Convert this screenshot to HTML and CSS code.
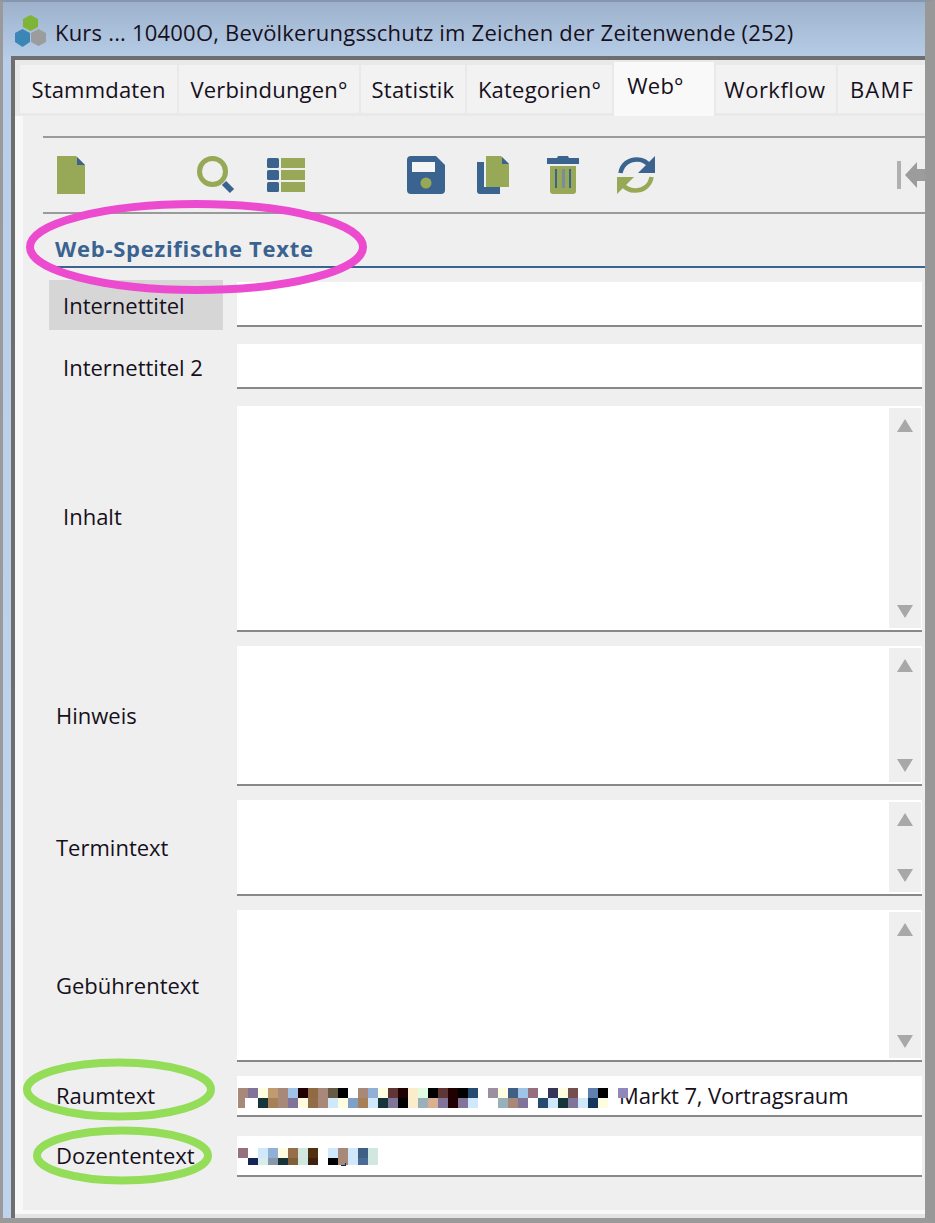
FILE: index.html
```html
<!DOCTYPE html>
<html lang="de">
<head>
<meta charset="utf-8">
<title>Kurs</title>
<link rel="stylesheet" href="styles.css">
</head>
<body>
<div class="app">
  <header class="titlebar">
    <svg class="appicon" width="34" height="34" viewBox="0 0 34 34">
      <polygon fill="#7fb536" points="16.5,1 24,5 24,13 16.5,17 9,13 9,5"/>
      <polygon fill="#3a86b6" points="8.5,15 16,19 16,28 8.5,33 1,28 1,19"/>
      <polygon fill="#9c9c9c" points="24.5,15 32,19 32,28 24.5,32 17,28 17,19"/>
    </svg>
    <span class="title">Kurs ... 10400O, Bevölkerungsschutz im Zeichen der Zeitenwende (252)</span>
  </header>
  <div class="window">
    <nav class="tabs">
      <div class="tab t1">Stammdaten</div>
      <div class="tab t2">Verbindungen°</div>
      <div class="tab t3">Statistik</div>
      <div class="tab t4">Kategorien°</div>
      <div class="tab active t5">Web°</div>
      <div class="tab t6">Workflow</div>
      <div class="tab t7">BAMF</div>
    </nav>
    <main class="content">
      <div class="toolbar">
        <svg class="tool" viewBox="0 0 38 38"><path fill="#97a957" d="M0 0H19L28 9V38H0Z"/><path fill="#3a6390" d="M20 1L28 9H20Z"/></svg>
        <svg class="tool spaced" viewBox="0 0 38 38"><circle cx="15.5" cy="15.500" r="13" fill="none" stroke="#97a957" stroke-width="5"/><path d="M27 27L35 35" stroke="#3a6390" stroke-width="6"/></svg>
        <svg class="tool" viewBox="0 0 38 38"><g fill="#3a6390"><rect y="2" width="12" height="10" rx="1.5"/><rect y="14" width="12" height="10" rx="1.5"/><rect y="26" width="12" height="10" rx="1.5"/></g><g fill="#97a957"><rect x="14" y="2" width="24" height="10"/><rect x="14" y="14" width="24" height="10"/><rect x="14" y="26" width="24" height="10"/></g></svg>
        <svg class="tool spaced" viewBox="0 0 38 38"><path fill="#3a6390" d="M4 0H29L38 9V34a4 4 0 0 1-4 4H4a4 4 0 0 1-4-4V4a4 4 0 0 1 4-4Z"/><rect x="5" y="6" width="23" height="10" fill="#f4f4f4"/><circle cx="19" cy="27" r="5.5" fill="#97a957"/></svg>
        <svg class="tool" viewBox="0 0 38 38"><path fill="#3a6390" d="M0 6H7V31H23V38H3a3 3 0 0 1-3-3Z"/><path fill="#97a957" d="M9 0H24L32 8V31H9Z"/><path fill="#3a6390" d="M25 1L32 8H25Z"/></svg>
        <svg class="tool" viewBox="0 0 38 38"><path fill="#3a6390" d="M11 0H21L22 2H32V8H0V2H10Z"/><path fill="#97a957" d="M3 10H29V35a3 3 0 0 1-3 3H6a3 3 0 0 1-3-3Z"/><g fill="#3a6390"><rect x="8" y="13" width="2" height="19"/><rect x="22" y="13" width="2" height="19"/></g><rect x="15" y="13" width="3" height="19" fill="#7d8c9c"/></svg>
        <svg class="tool" viewBox="0 0 38 38"><path d="M3.5 17C5 8 12 3.500 20 3.500C25 3.500 29 5 33 10" fill="none" stroke="#3a6390" stroke-width="4.500"/><path fill="#3a6390" d="M38 0V17H21Z"/><path d="M34.500 21C33 30 26 34.500 18 34.500C13 34.500 9 33 5 28" fill="none" stroke="#97a957" stroke-width="4.500"/><path fill="#97a957" d="M0 38V21H17Z"/></svg>
        <svg class="nav" viewBox="0 0 28 38"><rect y="5" width="4" height="28" fill="#b0b0b0"/><path fill="#9c9c9c" d="M8 19L20 6V13H28V25H20V32Z"/></svg>
      </div>
      <h2 class="section"><span>Web-Spezifische Texte</span></h2>
      <div class="form">
        <div class="row h45"><div class="label hl">Internettitel</div><div class="field"></div></div>
        <div class="row h45 gap17"><div class="label in level">Internettitel 2</div><div class="field"></div></div>
        <div class="row h226 gap17"><div class="label in lift3">Inhalt</div><div class="field"><div class="scroll"><i class="up"></i><i class="down"></i></div></div></div>
        <div class="row h140 gap14"><div class="label">Hinweis</div><div class="field"><div class="scroll"><i class="up"></i><i class="down"></i></div></div></div>
        <div class="row h96 gap14"><div class="label">Termintext</div><div class="field"><div class="scroll"><i class="up"></i><i class="down"></i></div></div></div>
        <div class="row h152 gap14"><div class="label">Gebührentext</div><div class="field"><div class="scroll"><i class="up"></i><i class="down"></i></div></div></div>
        <div class="row h41 gap14"><div class="label lift2">Raumtext</div>
          <div class="field line room">
            <span class="value">Markt 7, Vortragsraum</span>
            <svg class="mosaic m1" width="390" height="20" viewBox="0 0 390 20" shape-rendering="crispEdges">
              <rect x="0" y="0" width="10" height="10" fill="#a88878"/><rect x="10" y="0" width="10" height="10" fill="#80749a"/><rect x="20" y="0" width="10" height="10" fill="#fffde0"/><rect x="30" y="0" width="10" height="10" fill="#c09a70"/><rect x="40" y="0" width="10" height="10" fill="#a88878"/><rect x="50" y="0" width="10" height="10" fill="#a0c4e8"/><rect x="60" y="0" width="10" height="10" fill="#200000"/><rect x="70" y="0" width="10" height="10" fill="#8f6a45"/><rect x="80" y="0" width="10" height="10" fill="#a88878"/><rect x="90" y="0" width="10" height="10" fill="#655a45"/><rect x="100" y="0" width="10" height="10" fill="#000"/><rect x="120" y="0" width="10" height="10" fill="#a88878"/><rect x="130" y="0" width="10" height="10" fill="#90b0d8"/><rect x="140" y="0" width="10" height="10" fill="#fffde0"/><rect x="150" y="0" width="10" height="10" fill="#5f3535"/><rect x="160" y="0" width="10" height="10" fill="#200000"/><rect x="170" y="0" width="10" height="10" fill="#fbeccc"/><rect x="180" y="0" width="10" height="10" fill="#e0fbe0"/><rect x="190" y="0" width="10" height="10" fill="#000"/><rect x="200" y="0" width="10" height="10" fill="#5f3535"/><rect x="210" y="0" width="10" height="10" fill="#200000"/><rect x="220" y="0" width="10" height="10" fill="#000"/><rect x="230" y="0" width="10" height="10" fill="#264a70"/><rect x="250" y="0" width="10" height="10" fill="#9a90a0"/><rect x="260" y="0" width="10" height="10" fill="#fffde0"/><rect x="270" y="0" width="10" height="10" fill="#3f5f85"/><rect x="280" y="0" width="10" height="10" fill="#a0c4e8"/><rect x="290" y="0" width="10" height="10" fill="#966f7f"/><rect x="310" y="0" width="10" height="10" fill="#35355a"/><rect x="320" y="0" width="10" height="10" fill="#fffde0"/><rect x="330" y="0" width="10" height="10" fill="#754f50"/><rect x="350" y="0" width="10" height="10" fill="#6080b0"/><rect x="360" y="0" width="10" height="10" fill="#000"/><rect x="380" y="0" width="10" height="10" fill="#9088b8"/>
              <rect x="0" y="10" width="7" height="10" fill="#a88878"/><rect x="20" y="10" width="10" height="10" fill="#15353a"/><rect x="30" y="10" width="10" height="10" fill="#a88058"/><rect x="40" y="10" width="10" height="10" fill="#a88878"/><rect x="50" y="10" width="10" height="10" fill="#80749a"/><rect x="60" y="10" width="10" height="10" fill="#fffde0"/><rect x="70" y="10" width="10" height="10" fill="#906c48"/><rect x="80" y="10" width="10" height="10" fill="#a88878"/><rect x="90" y="10" width="10" height="10" fill="#d0e8fc"/><rect x="100" y="10" width="10" height="10" fill="#fffde0"/><rect x="110" y="10" width="10" height="10" fill="#80a0c8"/><rect x="120" y="10" width="10" height="10" fill="#a88058"/><rect x="130" y="10" width="10" height="10" fill="#d0e8fc"/><rect x="140" y="10" width="10" height="10" fill="#15353a"/><rect x="150" y="10" width="10" height="10" fill="#80749a"/><rect x="160" y="10" width="10" height="10" fill="#000"/><rect x="170" y="10" width="10" height="10" fill="#fbeccc"/><rect x="180" y="10" width="10" height="10" fill="#98b0b8"/><rect x="190" y="10" width="10" height="10" fill="#d8b090"/><rect x="200" y="10" width="10" height="10" fill="#80749a"/><rect x="210" y="10" width="10" height="10" fill="#200000"/><rect x="220" y="10" width="10" height="10" fill="#80749a"/><rect x="230" y="10" width="10" height="10" fill="#d0e8fc"/><rect x="260" y="10" width="10" height="10" fill="#98b0b8"/><rect x="270" y="10" width="10" height="10" fill="#a88878"/><rect x="280" y="10" width="10" height="10" fill="#80749a"/><rect x="300" y="10" width="10" height="10" fill="#264a70"/><rect x="310" y="10" width="10" height="10" fill="#d0e8fc"/><rect x="320" y="10" width="10" height="10" fill="#15353a"/><rect x="330" y="10" width="10" height="10" fill="#80749a"/><rect x="340" y="10" width="10" height="10" fill="#d0e8fc"/><rect x="350" y="10" width="10" height="10" fill="#15355a"/><rect x="360" y="10" width="10" height="10" fill="#fffde0"/>
            </svg>
          </div>
        </div>
        <div class="row h41 gap19"><div class="label lift2">Dozententext</div>
          <div class="field line doz">
            <svg class="mosaic m2" width="140" height="19" viewBox="0 0 140 19" shape-rendering="crispEdges">
              <rect x="0" y="0" width="10" height="10" fill="#95707f"/><rect x="20" y="0" width="10" height="10" fill="#d0e8fc"/><rect x="30" y="0" width="10" height="10" fill="#90b0d8"/><rect x="40" y="0" width="10" height="10" fill="#fffde0"/><rect x="50" y="0" width="10" height="10" fill="#966f4a"/><rect x="60" y="0" width="10" height="10" fill="#d0e8e0"/><rect x="70" y="0" width="10" height="10" fill="#52300f"/><rect x="90" y="0" width="10" height="10" fill="#d0e8fc"/><rect x="100" y="0" width="10" height="10" fill="#a88878"/><rect x="110" y="0" width="10" height="10" fill="#d0e8fc"/><rect x="120" y="0" width="10" height="10" fill="#3f5f85"/><rect x="130" y="0" width="10" height="10" fill="#d0e8e0"/>
              <rect x="10" y="10" width="10" height="7" fill="#15255a"/><rect x="20" y="10" width="10" height="7" fill="#d8ecec"/><rect x="30" y="10" width="10" height="7" fill="#8898a8"/><rect x="40" y="10" width="10" height="7" fill="#15353a"/><rect x="50" y="10" width="10" height="7" fill="#7f6038"/><rect x="60" y="10" width="10" height="7" fill="#d0e8e0"/><rect x="70" y="10" width="10" height="7" fill="#40200f"/><rect x="90" y="10" width="10" height="7" fill="#000"/><rect x="100" y="10" width="10" height="7" fill="#a88878"/><rect x="110" y="10" width="10" height="7" fill="#d0e8fc"/><rect x="120" y="10" width="10" height="7" fill="#4a6a98"/><rect x="130" y="10" width="10" height="7" fill="#d0e8e0"/><rect x="103" y="17" width="5" height="1" fill="#15255a"/><rect x="107" y="15" width="1" height="2" fill="#15255a"/>
            </svg>
          </div>
        </div>
      </div>
    </main>
    <div class="winfoot"></div>
  </div>
</div>
<svg class="marks" width="935" height="1223" viewBox="0 0 935 1223">
  <ellipse cx="196.500" cy="247" rx="166.500" ry="43" fill="none" stroke="#ec4bd0" stroke-width="8"/>
  <ellipse cx="119" cy="1089.500" rx="92" ry="27" fill="none" stroke="#93dd59" stroke-width="8"/>
  <ellipse cx="122.500" cy="1155.500" rx="85.500" ry="25" fill="none" stroke="#93dd59" stroke-width="8"/>
</svg>
</body>
</html>
```
FILE: styles.css
```css
* { box-sizing: border-box; }
html, body { margin: 0; padding: 0; }
body {
  width: 935px;
  height: 1223px;
  position: relative;
  overflow: hidden;
  font-family: "Open Sans", "Noto Sans", sans-serif;
  font-size: 22px;
  color: #16101c;
}
.app {
  width: 935px;
  height: 1223px;
  display: flex;
  flex-direction: column;
  border-left: 3px solid #9a9a9a;
  border-right: 10px solid #989898;
  border-bottom: 5px solid #9a9a9a;
  background: linear-gradient(180deg, #9db1cb 0, #b9cfe9 60px, #bfd4ec 100%);
  border-top: 2px solid #8496b0;
}
.titlebar {
  height: 54px;
  display: flex;
  align-items: center;
  padding-left: 11px;
  flex: none;
}
.appicon { margin-right: 7px; margin-top: 4px; flex: none; }
.title { font-size: 22px; letter-spacing: 0.2px; white-space: nowrap; margin-top: 6px; }
.window {
  flex: 1;
  min-height: 0;
  margin-left: 8px;
  display: flex;
  flex-direction: column;
  border-left: 4px solid #6e6e6e;
  border-top: 4px solid #6e6e6e;
  background: #efefef;
}
.tabs {
  height: 56px;
  flex: none;
  display: flex;
  align-items: flex-start;
  gap: 2px;
  padding-left: 5px;
  background: #e9e9e9;
  overflow: hidden;
}
.tab {
  height: 48px;
  margin-top: 5px;
  background: #f2f2f2;
  display: flex;
  align-items: center;
  justify-content: center;
  white-space: nowrap;
  letter-spacing: 0.2px;
  flex: none;
}
.t1 { width: 157px; }
.t2 { width: 180px; }
.t3 { width: 104px; }
.t4 { width: 145px; }
.t5 { width: 100px; }
.t6 { width: 120px; letter-spacing: 0.5px; padding-right: 2px; }
.t7 { width: 88px; letter-spacing: 1.2px; }
.tab.active {
  height: 54px;
  margin-top: 2px;
  padding: 0 17px 8px 0;
  background: #f9f9f9;
}
.content {
  flex: 1;
  min-height: 0;
  border-left: 8px solid #f8f8f8;
  border-bottom: 4px solid #f8f8f8;
  padding-top: 20px;
  background: #efefef;
}
.winfoot { height: 4px; flex: none; background: #e4e4e4; }
.toolbar {
  margin-left: 20px;
  height: 78px;
  padding: 18px 0 18px 14px;
  display: flex;
  gap: 32px;
  border-top: 2px solid #9a9a9a;
  border-bottom: 2px solid #9a9a9a;
  overflow: hidden;
}
.tool { width: 38px; height: 38px; flex: none; }
.spaced { margin-left: 70px; }
.nav { width: 28px; height: 38px; margin-left: auto; flex: none; }
.section {
  margin: 0 0 0 30px;
  height: 54px;
  border-bottom: 2px solid #3a6390;
  padding: 19px 0 0 2px;
  font-size: 22px;
  line-height: 30px;
  font-weight: 700;
  letter-spacing: 0.73px;
  color: #3a6390;
}
.form {
  margin-top: 14px;
  padding-right: 3px;
  display: flex;
  flex-direction: column;
}
.row { display: flex; align-items: center; }
.h45 { height: 45px; }
.h226 { height: 226px; }
.h140 { height: 140px; }
.h96 { height: 96px; }
.h152 { height: 152px; }
.h41 { height: 41px; }
.gap14 { margin-top: 14px; }
.gap17 { margin-top: 17px; }
.gap19 { margin-top: 19px; }
.label {
  width: 214px;
  flex: none;
  padding-left: 33px;
  padding-bottom: 2px;
  white-space: nowrap;
}
.label.in { padding-left: 40px; }
.label.level { padding-bottom: 0; }
.label.lift2 { padding-bottom: 4px; }
.label.lift3 { padding-bottom: 6px; }
.label.hl {
  width: 174px;
  height: 50px;
  margin: 0 14px 0 26px;
  padding: 0 0 0 14px;
  display: flex;
  align-items: center;
  background: #d6d6d6;
}
.field {
  flex: 1;
  height: 100%;
  position: relative;
  background: #fff;
  border-bottom: 2px solid #888;
  display: flex;
  justify-content: flex-end;
}
.scroll {
  width: 32px;
  margin: 2px 1px 2px 0;
  background: #efefef;
  display: flex;
  flex-direction: column;
  justify-content: space-between;
  align-items: center;
  padding: 11px 0 10px;
}
.up, .down { display: block; width: 0; height: 0; border-left: 8px solid transparent; border-right: 8px solid transparent; }
.up { border-bottom: 13px solid #a8a8a8; }
.down { border-top: 13px solid #a8a8a8; }
.field.line { justify-content: flex-start; align-items: center; }
.room { padding-left: 382px; }
.value { white-space: nowrap; letter-spacing: -0.12px; margin-top: -2px; }
.mosaic { position: absolute; left: 1px; }
.m1 { top: 12px; }
.m2 { top: 12px; }
.marks { position: absolute; left: 0; top: 0; pointer-events: none; }
```
